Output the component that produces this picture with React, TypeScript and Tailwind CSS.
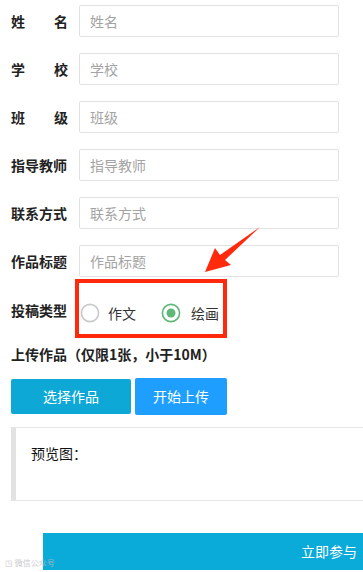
import React from "react";

const font = { fontFamily: '"Noto Sans CJK SC", "Noto Sans", sans-serif' };

function Row({ label, placeholder, spread }: { label: string; placeholder: string; spread?: boolean }) {
  return (
    <div className="flex items-center h-[32px] mb-[16px]">
      <div className={`w-[57px] shrink-0 text-[14px] font-bold text-[#222] flex ${spread ? "justify-between" : ""}`}>
        {spread ? label.split("").map((c, i) => <span key={i}>{c}</span>) : label}
      </div>
      <div className="ml-[11px] w-[260px] h-[32px] border border-[#e2e2e2] rounded-[2px] flex items-center pl-[10px] text-[14px] text-[#a3a3a3]">
        {placeholder}
      </div>
    </div>
  );
}

function Radio({ checked }: { checked?: boolean }) {
  return (
    <svg width="20" height="20" viewBox="0 0 20 20">
      <circle cx="10" cy="10" r="8.6" fill="none" stroke={checked ? "#5FB878" : "#c9c9c9"} strokeWidth="1.6" />
      {checked && <circle cx="10" cy="10" r="4.5" fill="#5FB878" />}
    </svg>
  );
}

export default function App() {
  return (
    <div className="relative w-[363px] h-[572px] bg-white overflow-hidden" style={font}>
      <div className="pt-[5px] pl-[11px]">
        <Row label="姓名" placeholder="姓名" spread />
        <Row label="学校" placeholder="学校" spread />
        <Row label="班级" placeholder="班级" spread />
        <Row label="指导教师" placeholder="指导教师" />
        <Row label="联系方式" placeholder="联系方式" />
        <Row label="作品标题" placeholder="作品标题" />

        <div className="flex items-center h-[30px] mt-[21px]">
          <div className="w-[57px] shrink-0 text-[14px] font-bold text-[#222] -mt-[5px]">投稿类型</div>
          <div className="ml-[12px] flex items-center">
            <Radio />
            <span className="ml-[8px] text-[14px] text-[#333]">作文</span>
            <span className="ml-[25px]"><Radio checked /></span>
            <span className="ml-[10px] text-[14px] text-[#333]">绘画</span>
          </div>
        </div>

        <div className="mt-[16px] text-[14px] font-bold text-[#222] h-[20px] leading-[20px]">上传作品（仅限1张，小于10M）</div>

        <div className="mt-[14px] flex gap-[4px] items-start">
          <div className="w-[120px] h-[35px] rounded-[2px] bg-[#0ea8d6] text-white text-[14px] flex items-center justify-center mt-[1px]">选择作品</div>
          <div className="w-[92px] h-[37px] rounded-[2px] bg-[#1E9FFF] text-white text-[14px] flex items-center justify-center">开始上传</div>
        </div>

        <div className="mt-[12px] h-[74px] border border-[#e6e6e6] border-l-[5px] border-l-[#e2e2e2] border-r-0 pl-[15px] pt-[15px] text-[14px] text-[#111]">
          预览图：
        </div>

        <div className="mt-[32px] ml-[32px] h-[37px] bg-[#0aaad9] text-white text-[14px] flex items-center justify-end pr-[6px]">
          立即参与
        </div>
      </div>

      {/* annotation box */}
      <div className="absolute left-[75px] top-[279px] w-[152px] h-[59px] border-[4px] border-[#ff2a0c]" />
      {/* annotation arrow */}
      <svg className="absolute left-[195px] top-[220px]" width="75" height="60" viewBox="0 0 75 60">
        <polygon points="65,7 30,40 36,45 10,52 20,28 25,35" fill="#ff2a0c" />
      </svg>
      {/* watermark */}
      <div className="absolute left-[5px] top-[558px] text-[8px] text-[#bbb] leading-[10px] opacity-80">◳ 微信公众号</div>
    </div>
  );
}
